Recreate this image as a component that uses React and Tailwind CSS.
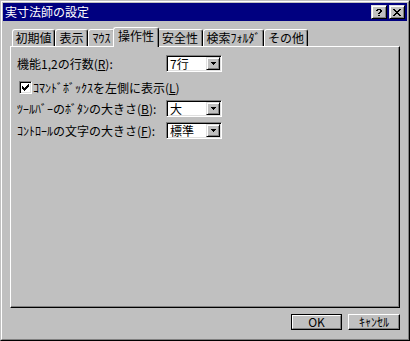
import React from "react";

function Pix({ rows, className = "" }) {
  const h = rows.length;
  const w = rows[0].length;
  const rects = [];
  rows.forEach((r, y) => {
    [...r].forEach((c, x) => {
      if (c === "x") rects.push(<rect key={`${x}-${y}`} x={x} y={y} width={1} height={1} fill="currentColor" />);
    });
  });
  return (
    <svg width={w} height={h} viewBox={`0 0 ${w} ${h}`} shapeRendering="crispEdges" className={className}>
      {rects}
    </svg>
  );
}

const CLOSE = ["xx....xx", ".xx..xx.", "..xxxx..", "...xx...", "..xxxx..", ".xx..xx.", "xx....xx"];
const HELP = [".xxxx.", "xx..xx", "....xx", "...xx.", "..xx..", "......", "..xx.."];
const CHECK = ["......x", ".....xx", "x...xxx", "xx.xxx.", "xxxxx..", ".xxx...", "..x...."];
const ARROW = ["xxxxx", ".xxx.", "..x.."];

function CapBtn({ children, className = "" }) {
  return (
    <div
      className={`w-[16px] h-[14px] bg-[#c0c0c0] border border-t-[#dfdfdf] border-l-[#dfdfdf] border-r-black border-b-black shadow-[inset_1px_1px_0_#fff,inset_-1px_-1px_0_#808080] flex items-center justify-center text-black ${className}`}
    >
      {children}
    </div>
  );
}

function Combo({ value }) {
  return (
    <div className="w-[56px] h-[17px] bg-white border border-t-[#808080] border-l-[#808080] border-r-white border-b-white shadow-[inset_1px_1px_0_#000,inset_-1px_-1px_0_#dfdfdf] p-[1px] flex">
      <div className="flex-1 pl-[2px] leading-[13px]">{value}</div>
      <div className="w-[14px] h-[13px] bg-[#c0c0c0] border border-t-[#dfdfdf] border-l-[#dfdfdf] border-r-black border-b-black shadow-[inset_1px_1px_0_#fff,inset_-1px_-1px_0_#808080] flex items-center justify-center">
        <Pix rows={ARROW} />
      </div>
    </div>
  );
}

function Tab({ label, className = "" }) {
  return (
    <div
      className={`h-[17px] bg-[#c0c0c0] border-l border-t border-r border-l-white border-t-white border-r-black rounded-t-[3px] shadow-[inset_-1px_0_0_#808080] flex justify-center leading-[15px] ${className}`}
    >
      {label}
    </div>
  );
}

function U({ children }) {
  return <span className="underline underline-offset-[1px]">{children}</span>;
}

export default function App() {
  return (
    <div className="w-[410px] h-[341px] bg-[#c0c0c0] font-['Noto_Sans_CJK_JP',sans-serif] text-[12px] text-black">
      <div className="w-full h-full border border-t-[#c0c0c0] border-l-[#c0c0c0] border-r-black border-b-black">
        <div className="w-full h-full border border-t-white border-l-white border-r-[#808080] border-b-[#808080] p-[1px] flex flex-col">
          <div className="h-[18px] shrink-0 bg-[#000080] flex items-center pl-[2px] pr-[2px]">
            <span className="flex-1 text-white leading-[18px]">実寸法師の設定</span>
            <CapBtn>
              <Pix rows={HELP} />
            </CapBtn>
            <CapBtn className="ml-[2px]">
              <Pix rows={CLOSE} />
            </CapBtn>
          </div>

          <div className="flex-1 px-[7px] pt-[6px] flex flex-col">
            <div className="relative z-10 flex items-end h-[19px] pl-[2px]">
              <Tab label="初期値" className="w-[43px]" />
              <Tab label="表示" className="w-[33px]" />
              <Tab label="ﾏｳｽ" className="w-[27px]" />
              <Tab label="操作性" className="relative z-10 w-[46px] -mx-[2px] -mb-[1px] h-[20px] leading-[16px]" />
              <Tab label="安全性" className="w-[46px]" />
              <Tab label="検索ﾌｫﾙﾀﾞ" className="w-[61px]" />
              <Tab label="その他" className="w-[44px]" />
            </div>

            <div className="h-[262px] shrink-0 border border-t-white border-l-white border-r-black border-b-black shadow-[inset_-1px_-1px_0_#808080] pl-[6px] pt-[8px] flex flex-col">
              <div className="flex items-center h-[17px]">
                <div className="w-[149px]">
                  機能1,2の行数(<U>R</U>):
                </div>
                <Combo value="7行" />
              </div>
              <div className="flex items-center h-[13px] mt-[9px] ml-[2px]">
                <div className="w-[13px] h-[13px] bg-white border border-t-[#808080] border-l-[#808080] border-r-white border-b-white shadow-[inset_1px_1px_0_#000,inset_-1px_-1px_0_#dfdfdf] flex items-center justify-center">
                  <Pix rows={CHECK} />
                </div>
                <span className="ml-[1px]">
                  ｺﾏﾝﾄﾞﾎﾞｯｸｽを左側に表示(<U>L</U>)
                </span>
              </div>
              <div className="flex items-center h-[17px] mt-[6px]">
                <div className="w-[149px]">
                  ﾂｰﾙﾊﾞｰのﾎﾞﾀﾝの大きさ(<U>B</U>):
                </div>
                <Combo value="大" />
              </div>
              <div className="flex items-center h-[17px] mt-[5px]">
                <div className="w-[149px]">
                  ｺﾝﾄﾛｰﾙの文字の大きさ(<U>F</U>):
                </div>
                <Combo value="標準" />
              </div>
            </div>

            <div className="flex justify-end gap-[6px] mt-[6px]">
              <div className="w-[51px] h-[16px] border border-black">
                <div className="h-full border border-t-white border-l-white border-r-[#808080] border-b-[#808080] flex items-center justify-center leading-[12px]">
                  OK
                </div>
              </div>
              <div className="w-[52px] h-[16px] border border-t-white border-l-white border-r-black border-b-black shadow-[inset_-1px_-1px_0_#808080] flex items-center justify-center leading-[12px]">
                ｷｬﾝｾﾙ
              </div>
            </div>
          </div>
        </div>
      </div>
    </div>
  );
}
